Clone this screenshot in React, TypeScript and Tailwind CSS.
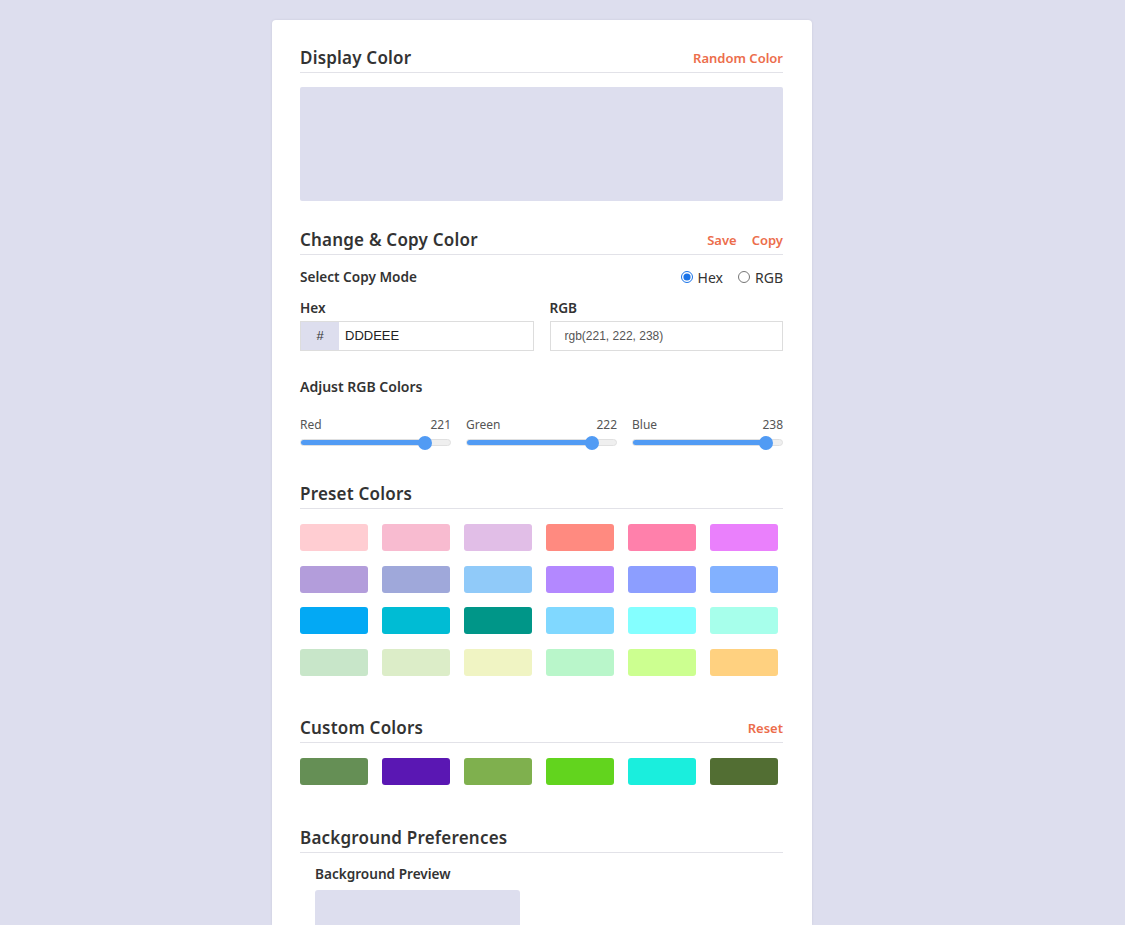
import React from "react";

const preset = [
  ["#ffcdd2", "#f8bbd0", "#e1bee7", "#ff8a80", "#ff80ab", "#ea80fc"],
  ["#b39ddb", "#9fa8da", "#90caf9", "#b388ff", "#8c9eff", "#82b1ff"],
  ["#03a9f4", "#00bcd4", "#009688", "#80d8ff", "#84ffff", "#a7ffeb"],
  ["#c8e6c9", "#dcedc8", "#f0f4c3", "#b9f6ca", "#ccff90", "#ffd180"],
];
const custom = ["#658f55", "#5a17b3", "#7fb04e", "#62d41e", "#1aeedd", "#526e33"];

function Heading({ title, actions }: { title: string; actions?: string[] }) {
  return (
    <div className="flex items-end justify-between border-b border-[#e2e2e8] pb-[4px]">
      <h2 className="text-[17px] font-semibold leading-[20px] tracking-[0.2px] text-[#333]">{title}</h2>
      {actions && (
        <div className="flex gap-[15px] pb-[1px]">
          {actions.map((a) => (
            <span key={a} className="text-[13px] font-semibold leading-[18px] text-[#ec6d4b]">
              {a}
            </span>
          ))}
        </div>
      )}
    </div>
  );
}

function Slider({ label, value }: { label: string; value: number }) {
  const f = value / 255;
  const pos = `calc(${f} * (100% - 14px) + 7px)`;
  return (
    <div className="flex-1">
      <div className="flex justify-between text-[12px] leading-[16px] text-[#555]">
        <span>{label}</span>
        <span>{value}</span>
      </div>
      <div className="relative mt-[6px] h-[7px] rounded-full border border-[#e0e0e0] bg-[#efefef]">
        <div className="h-full rounded-full bg-[#519bf4]" style={{ width: pos }} />
        <div
          className="absolute top-1/2 h-[14px] w-[14px] -translate-x-1/2 -translate-y-1/2 rounded-full bg-[#519bf4]"
          style={{ left: pos }}
        />
      </div>
    </div>
  );
}

function Swatch({ c }: { c: string }) {
  return <div className="h-[27px] w-[68px] rounded-[3px]" style={{ background: c }} />;
}

export default function App() {
  return (
    <div
      className="min-h-[925px] bg-[#dddeee] pt-[20px]"
      style={{ fontFamily: '"Noto Sans", "Open Sans", sans-serif' }}
    >
      <div className="w-[1084px]">
        <div className="mx-auto h-[905px] w-[540px] overflow-hidden rounded-t-[4px] bg-white pl-[28px] pr-[29px] pt-[28px] shadow-[0_0_3px_rgba(0,0,0,0.08)]">
          <Heading title="Display Color" actions={["Random Color"]} />
          <div className="mt-[14px] h-[114px] rounded-[2px] bg-[#dddeee]" />

          <div className="mt-[29px]">
            <Heading title="Change & Copy Color" actions={["Save", "Copy"]} />
          </div>
          <div className="mt-[12px] flex h-[20px] items-center justify-between">
            <span className="text-[13.6px] font-semibold text-[#333]">Select Copy Mode</span>
            <div className="flex items-center gap-[15px] text-[14px] text-[#333]">
              <label className="flex items-center gap-[5px]">
                <input type="radio" name="m" defaultChecked className="m-0 h-[12px] w-[12px] accent-[#1a73e8]" />
                Hex
              </label>
              <label className="flex items-center gap-[5px]">
                <input type="radio" name="m" className="m-0 h-[12px] w-[12px]" />
                RGB
              </label>
            </div>
          </div>
          <div className="mt-[12px] flex gap-[16px]">
            <div className="flex-1">
              <div className="text-[13.6px] font-semibold leading-[18px] text-[#333]">Hex</div>
              <div className="mt-[4px] flex h-[30px] border border-[#ddd]">
                <div className="flex w-[38px] items-center justify-center bg-[#dddeee] text-[13px] text-[#333]" style={{ fontFamily: '"Liberation Sans", Arial, sans-serif' }}>#</div>
                <div className="flex items-center pl-[6px] text-[13px] text-[#222]" style={{ fontFamily: '"Liberation Sans", Arial, sans-serif' }}>DDDEEE</div>
              </div>
            </div>
            <div className="flex-1">
              <div className="text-[13.6px] font-semibold leading-[18px] text-[#333]">RGB</div>
              <div className="mt-[4px] flex h-[30px] items-center border border-[#ddd] pl-[14px] text-[12px] text-[#555]" style={{ fontFamily: '"Liberation Sans", Arial, sans-serif' }}>
                rgb(221, 222, 238)
              </div>
            </div>
          </div>

          <div className="mt-[27px] text-[14px] font-semibold leading-[18px] text-[#333]">Adjust RGB Colors</div>
          <div className="mt-[21px] flex gap-[15px]">
            <Slider label="Red" value={221} />
            <Slider label="Green" value={222} />
            <Slider label="Blue" value={238} />
          </div>

          <div className="mt-[38px]">
            <Heading title="Preset Colors" />
          </div>
          <div className="mt-[15px] flex flex-col gap-[14.7px]">
            {preset.map((row, i) => (
              <div key={i} className="flex gap-[14px]">
                {row.map((c) => (
                  <Swatch key={c} c={c} />
                ))}
              </div>
            ))}
          </div>

          <div className="mt-[42px]">
            <Heading title="Custom Colors" actions={["Reset"]} />
          </div>
          <div className="mt-[15px] flex gap-[14px]">
            {custom.map((c) => (
              <Swatch key={c} c={c} />
            ))}
          </div>

          <div className="mt-[43px]">
            <Heading title="Background Preferences" />
          </div>
          <div className="px-[15px]">
            <div className="mt-[12px] text-[13.6px] font-semibold leading-[18px] text-[#333]">Background Preview</div>
            <div className="mt-[7px] h-[60px] w-[205px] rounded-t-[3px] bg-[#dddeee]" />
          </div>
        </div>
      </div>
    </div>
  );
}
